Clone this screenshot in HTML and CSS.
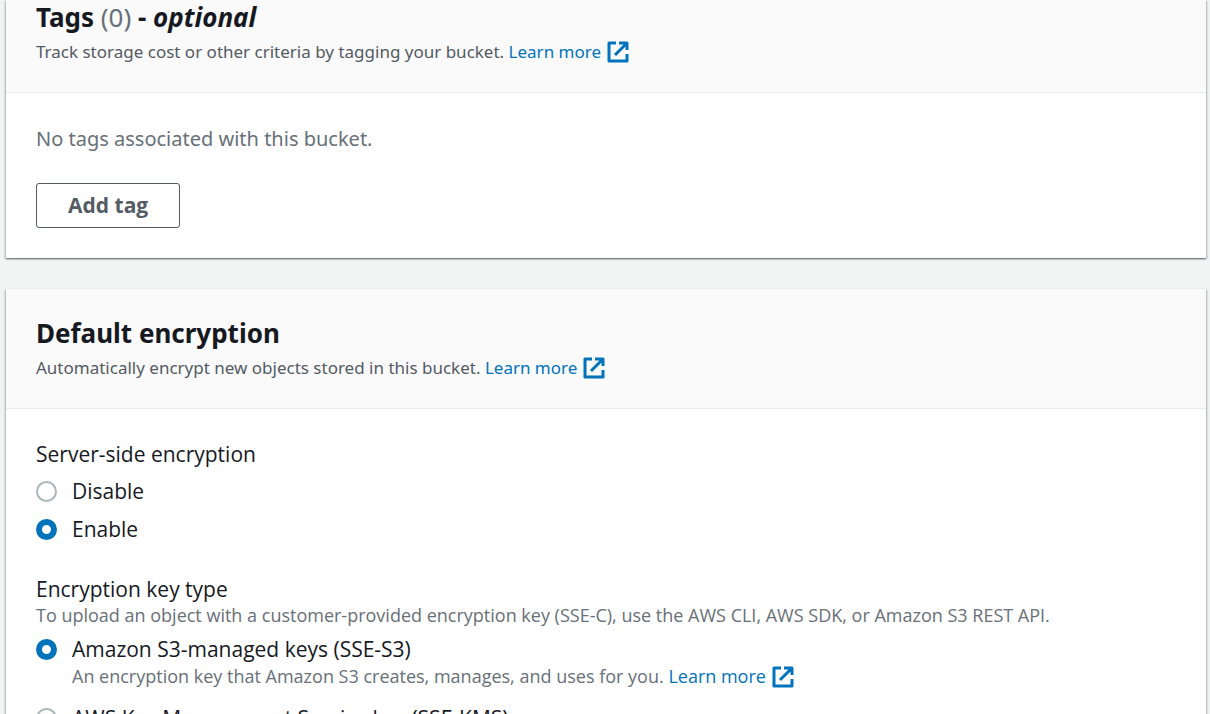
FILE: index.html
```html
<!DOCTYPE html>
<html lang="en">
<head>
<meta charset="utf-8">
<title>Create bucket</title>
<link rel="stylesheet" href="styles.css">
</head>
<body>
<svg class="sprite" aria-hidden="true">
  <symbol id="external" viewBox="0 0 22 22">
    <path d="M9 2H2v18h18v-7M12 2h8v7M19 3L8 14" fill="none" stroke="currentColor" stroke-width="3" stroke-linejoin="round"/>
  </symbol>
</svg>
<main class="page">
  <section class="panel panel-first">
    <header class="panel-header">
      <h2 class="title">Tags <span class="count">(0)</span> - <em>optional</em></h2>
      <p class="description">Track storage cost or other criteria by tagging your bucket. <a class="link" href="#">Learn more<svg class="icon" aria-hidden="true"><use href="#external"/></svg></a></p>
    </header>
    <div class="panel-body">
      <p class="empty">No tags associated with this bucket.</p>
      <button class="button" type="button">Add tag</button>
    </div>
  </section>
  <section class="panel">
    <header class="panel-header">
      <h2 class="title">Default encryption</h2>
      <p class="description">Automatically encrypt new objects stored in this bucket. <a class="link" href="#">Learn more<svg class="icon" aria-hidden="true"><use href="#external"/></svg></a></p>
    </header>
    <div class="panel-body">
      <fieldset class="field">
        <legend class="label">Server-side encryption</legend>
        <div class="options">
          <label class="option"><input class="radio" type="radio" name="sse"><span>Disable</span></label>
          <label class="option"><input class="radio" type="radio" name="sse" checked><span>Enable</span></label>
        </div>
      </fieldset>
      <fieldset class="field">
        <legend class="label">Encryption key type</legend>
        <p class="hint">To upload an object with a customer-provided encryption key (SSE-C), use the AWS CLI, AWS SDK, or Amazon S3 REST API.</p>
        <div class="options options-detailed">
          <div>
            <label class="option"><input class="radio" type="radio" name="key" checked><span>Amazon S3-managed keys (SSE-S3)</span></label>
            <p class="hint option-hint">An encryption key that Amazon S3 creates, manages, and uses for you. <a class="link" href="#">Learn more<svg class="icon" aria-hidden="true"><use href="#external"/></svg></a></p>
          </div>
          <label class="option"><input class="radio" type="radio" name="key"><span>AWS Key Management Service key (SSE-KMS)</span></label>
        </div>
      </fieldset>
    </div>
  </section>
</main>
</body>
</html>
```
FILE: styles.css
```css
* { box-sizing: border-box; }

body {
  margin: 0;
  background: #f2f3f3;
  color: #16191f;
  font-family: "Open Sans", "Noto Sans", sans-serif;
  font-size: 21px;
  line-height: 33px;
}

.sprite { display: none; }

.page {
  display: flex;
  flex-direction: column;
  gap: 31px;
  height: 100vh;
  overflow: hidden;
  padding: 0 4px 0 6px;
}

.panel {
  flex: none;
  background: #fff;
  box-shadow: 0 1px 1px 0 rgba(0, 28, 36, 0.3), 1px 1px 2px 0 rgba(0, 28, 36, 0.25), -1px 1px 2px 0 rgba(0, 28, 36, 0.25);
}

.panel-header {
  padding: 27px 30px;
  background: #fafafa;
  border-bottom: 1px solid #eaeded;
}

.panel-first .panel-header { padding-top: 0; }

.title {
  margin: 0 0 4px;
  font-size: 26px;
  line-height: 34px;
  font-weight: 700;
}

.title, .description, .empty { font-family: "Noto Sans", "Open Sans", sans-serif; }

.count { color: #687078; font-weight: 400; }

.description, .hint {
  margin: 0;
  line-height: 27px;
}

.description { color: #545b64; font-size: 17px; }

.hint { color: #687078; font-size: 18px; }

.link { color: #0073bb; text-decoration: none; }

.icon {
  width: 22px;
  height: 22px;
  margin: -3px 0 0 6px;
  vertical-align: middle;
}

.panel-body { padding: 29px 30px 30px; }

.empty { margin: 0 0 28px; color: #687078; font-size: 20px; }

.button {
  display: block;
  height: 45px;
  padding: 0 31px;
  border: 1px solid #545b64;
  border-radius: 3px;
  background: #fff;
  color: #545b64;
  font: inherit;
  font-weight: 700;
}

.field { margin: 0; padding: 0; border: 0; }
.field + .field { margin-top: 27px; }

.label { padding: 0; }

.options {
  display: flex;
  flex-direction: column;
  gap: 5px;
  margin-top: 4px;
}

.option { display: flex; align-items: center; gap: 15px; }

.radio {
  appearance: none;
  flex: none;
  width: 21px;
  height: 21px;
  margin: 0;
  border: 2px solid #aab7b8;
  border-radius: 50%;
  background: #fff;
}

.radio:checked { border: 6px solid #0073bb; }

.option-hint { margin-top: -3px; padding-left: 36px; }

.field .label + .hint { margin-top: -4px; }

.options-detailed { gap: 12px; }
```
